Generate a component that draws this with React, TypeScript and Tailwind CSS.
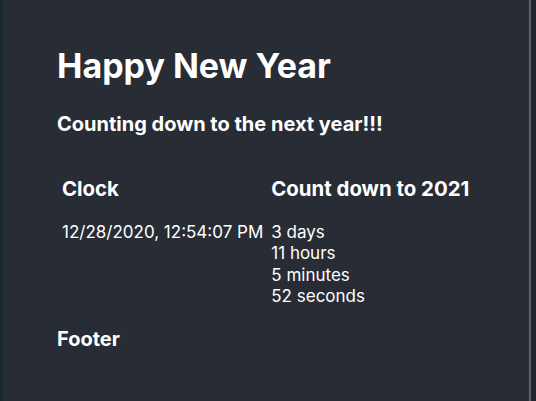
const countdown = ["3 days", "11 hours", "5 minutes", "52 seconds"];

const App = () => {
  return (
    <div className="flex h-[401px] w-[536px] overflow-hidden bg-[#282c34] font-['Inter',sans-serif] text-white">
      {/* left edge of the neighbour window */}
      <div className="w-[3px] shrink-0 bg-[#1a2630]" />

      <div className="flex-1 pl-[54px]">
        <h1 className="mt-[46px] text-[34px] leading-[40px] font-bold">Happy New Year</h1>
        <h3 className="mt-[26px] text-[20px] leading-[24px] font-bold">
          Counting down to the next year!!!
        </h3>

        <table className="mt-[41px] ml-[5px] border-separate border-spacing-0">
          <thead>
            <tr>
              <th className="pr-[8px] text-left align-top text-[20.4px] leading-[24px] font-bold">Clock</th>
              <th className="text-left align-top text-[20.4px] leading-[24px] font-bold">Count down to 2021</th>
            </tr>
          </thead>
          <tbody>
            <tr>
              <td className="pt-[21px] pr-[8px] align-top text-[17px] leading-[21.3px]">
                12/28/2020, 12:54:07 PM
              </td>
              <td className="pt-[21px] align-top text-[17px] leading-[21.3px]">
                {countdown.map((t) => (
                  <div key={t}>{t}</div>
                ))}
              </td>
            </tr>
          </tbody>
        </table>

        <div className="mt-[20px] text-[20px] leading-[24px] font-bold">Footer</div>
      </div>

      {/* right border */}
      <div className="w-[2px] shrink-0 bg-[#5c616b]" />
      <div className="w-[5px] shrink-0 bg-[#22252c]" />
    </div>
  );
};

export default App;
